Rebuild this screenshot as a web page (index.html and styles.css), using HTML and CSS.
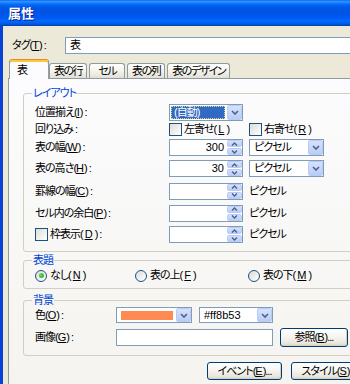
FILE: index.html
```html
<!DOCTYPE html>
<html lang="ja">
<head>
  <meta charset="UTF-8" />
  <meta name="viewport" content="width=device-width, initial-scale=1.0"/>
  <title>属性</title>
  <link rel="stylesheet" href="styles.css">
</head>
<body>
  <div class="window">
    <div class="titlebar">属性</div>

    <div class="frame">
      <!-- Tag name -->
      <div class="tag-row">
        <span class="tag-label">タグ(<u>T</u>) :</span>
        <div class="textbox tag-input">表</div>
      </div>

      <!-- Tabs -->
      <div class="tabs">
        <div class="tab active">表</div>
        <div class="tab">表の行</div>
        <div class="tab">セル</div>
        <div class="tab">表の列</div>
        <div class="tab">表のデザイン</div>
      </div>

      <div class="panel">
        <!-- Layout -->
        <fieldset class="group layout">
          <legend>レイアウト</legend>
          <div class="layout-grid">
            <span>位置揃え(<u>I</u>) :</span>
            <div class="select">
              <span class="select-value selected">(自動)</span>
              <span class="drop"><svg width="8" height="5" viewBox="0 0 8 5"><path d="M1 1 L4 4 L7 1" stroke="#4d6185" stroke-width="1.6" fill="none"/></svg></span>
            </div>
            <span></span>

            <span>回り込み :</span>
            <label class="check"><span class="box"></span>左寄せ(<u>L</u>)</label>
            <label class="check"><span class="box"></span>右寄せ(<u>R</u>)</label>

            <span>表の幅(<u>W</u>) :</span>
            <div class="spin">
              <span class="spin-value">300</span>
              <span class="spin-btns">
                <span><svg width="7" height="4" viewBox="0 0 7 4"><path d="M1 3.5 L3.5 1 L6 3.5" stroke="#4d6185" stroke-width="1.4" fill="none"/></svg></span>
                <span><svg width="7" height="4" viewBox="0 0 7 4"><path d="M1 0.5 L3.5 3 L6 0.5" stroke="#4d6185" stroke-width="1.4" fill="none"/></svg></span>
              </span>
            </div>
            <div class="select unit">
              <span class="select-value">ピクセル</span>
              <span class="drop"><svg width="8" height="5" viewBox="0 0 8 5"><path d="M1 1 L4 4 L7 1" stroke="#4d6185" stroke-width="1.6" fill="none"/></svg></span>
            </div>

            <span>表の高さ(<u>H</u>) :</span>
            <div class="spin">
              <span class="spin-value">30</span>
              <span class="spin-btns">
                <span><svg width="7" height="4" viewBox="0 0 7 4"><path d="M1 3.5 L3.5 1 L6 3.5" stroke="#4d6185" stroke-width="1.4" fill="none"/></svg></span>
                <span><svg width="7" height="4" viewBox="0 0 7 4"><path d="M1 0.5 L3.5 3 L6 0.5" stroke="#4d6185" stroke-width="1.4" fill="none"/></svg></span>
              </span>
            </div>
            <div class="select unit">
              <span class="select-value">ピクセル</span>
              <span class="drop"><svg width="8" height="5" viewBox="0 0 8 5"><path d="M1 1 L4 4 L7 1" stroke="#4d6185" stroke-width="1.6" fill="none"/></svg></span>
            </div>

            <span>罫線の幅(<u>C</u>) :</span>
            <div class="spin">
              <span class="spin-value"></span>
              <span class="spin-btns">
                <span><svg width="7" height="4" viewBox="0 0 7 4"><path d="M1 3.5 L3.5 1 L6 3.5" stroke="#4d6185" stroke-width="1.4" fill="none"/></svg></span>
                <span><svg width="7" height="4" viewBox="0 0 7 4"><path d="M1 0.5 L3.5 3 L6 0.5" stroke="#4d6185" stroke-width="1.4" fill="none"/></svg></span>
              </span>
            </div>
            <span>ピクセル</span>

            <span>セル内の余白(<u>P</u>) :</span>
            <div class="spin">
              <span class="spin-value"></span>
              <span class="spin-btns">
                <span><svg width="7" height="4" viewBox="0 0 7 4"><path d="M1 3.5 L3.5 1 L6 3.5" stroke="#4d6185" stroke-width="1.4" fill="none"/></svg></span>
                <span><svg width="7" height="4" viewBox="0 0 7 4"><path d="M1 0.5 L3.5 3 L6 0.5" stroke="#4d6185" stroke-width="1.4" fill="none"/></svg></span>
              </span>
            </div>
            <span>ピクセル</span>

            <label class="check"><span class="box"></span>枠表示(<u>D</u>) :</label>
            <div class="spin">
              <span class="spin-value"></span>
              <span class="spin-btns">
                <span><svg width="7" height="4" viewBox="0 0 7 4"><path d="M1 3.5 L3.5 1 L6 3.5" stroke="#4d6185" stroke-width="1.4" fill="none"/></svg></span>
                <span><svg width="7" height="4" viewBox="0 0 7 4"><path d="M1 0.5 L3.5 3 L6 0.5" stroke="#4d6185" stroke-width="1.4" fill="none"/></svg></span>
              </span>
            </div>
            <span>ピクセル</span>
          </div>
        </fieldset>

        <!-- Caption -->
        <fieldset class="group caption">
          <legend>表題</legend>
          <div class="radio-row">
            <label class="radio"><span class="dot on"></span>なし(<u>N</u>)</label>
            <label class="radio"><span class="dot"></span>表の上(<u>F</u>)</label>
            <label class="radio"><span class="dot"></span>表の下(<u>M</u>)</label>
          </div>
        </fieldset>

        <!-- Background -->
        <fieldset class="group background">
          <legend>背景</legend>
          <div class="bg-row">
            <span class="bg-label">色(<u>O</u>) :</span>
            <div class="color-pick">
              <span class="swatch-wrap"><span class="swatch"></span></span>
              <span class="drop"><svg width="8" height="5" viewBox="0 0 8 5"><path d="M1 1 L4 4 L7 1" stroke="#4d6185" stroke-width="1.6" fill="none"/></svg></span>
            </div>
            <div class="select hex">
              <span class="select-value">#ff8b53</span>
              <span class="drop"><svg width="8" height="5" viewBox="0 0 8 5"><path d="M1 1 L4 4 L7 1" stroke="#4d6185" stroke-width="1.6" fill="none"/></svg></span>
            </div>
          </div>
          <div class="bg-row image-row">
            <span class="bg-label">画像(<u>G</u>) :</span>
            <div class="textbox image-input"></div>
            <button class="btn browse">参照(<u>B</u>)...</button>
          </div>
        </fieldset>

        <div class="actions">
          <button class="btn">イベント(<u>E</u>)...</button>
          <button class="btn">スタイル(<u>S</u>)...</button>
        </div>
      </div>
    </div>
  </div>
</body>
</html>
```

FILE: styles.css
```css
* {
  box-sizing: border-box;
}

body {
  margin: 0;
  overflow: hidden;
  background: #ece9d8;
  font-family: "Liberation Sans", "Noto Sans CJK JP", sans-serif;
  font-size: 11px;
  line-height: 13px;
  letter-spacing: -1px;
  font-feature-settings: "palt";
  color: #000;
}

u {
  text-decoration: underline;
  text-underline-offset: 1px;
  letter-spacing: 0;
}

.window {
  width: 381px;
  height: 384px;
  display: flex;
  flex-direction: column;
}

.titlebar {
  flex: none;
  height: 26px;
  padding-left: 8px;
  display: flex;
  align-items: center;
  color: #fff;
  font-size: 13px;
  font-weight: bold;
  letter-spacing: 0;
  text-shadow: 1px 1px 0 #0a1e8c;
  background: linear-gradient(#0058ee 0%, #3593ff 4%, #288eff 8%, #127dff 12%, #036ffc 16%, #0262ee 22%, #0057e5 30%, #0054e3 40%, #0055eb 60%, #005bf5 70%, #026afe 80%, #0062ef 88%, #0052d6 94%, #0040ab 100%);
}

.frame {
  flex: 1;
  min-height: 0;
  display: flex;
  flex-direction: column;
  border-left: 3px solid #0842d6;
  padding-left: 5px;
}

/* tag row */
.tag-row {
  display: flex;
  align-items: center;
  height: 17px;
  margin-top: 11px;
  padding-left: 4px;
}

.tag-label {
  width: 53px;
}

.textbox {
  height: 17px;
  border: 1px solid #7f9db9;
  background: #fff;
  padding-left: 4px;
  display: flex;
  align-items: center;
}

.tag-input {
  flex: 1;
}

/* tabs */
.tabs {
  display: flex;
  align-items: flex-end;
  height: 19px;
  margin-top: 5px;
  padding-left: 1px;
  position: relative;
  z-index: 1;
  letter-spacing: -1.5px;
}

.tab {
  height: 15px;
  min-width: 36px;
  padding: 0 4px;
  margin-left: 2px;
  display: flex;
  align-items: center;
  justify-content: center;
  border: 1px solid #919b9c;
  border-bottom: none;
  border-radius: 3px 3px 0 0;
  background: linear-gradient(#fff, #f4f3ee 50%, #e2e0d5);
}

.tab.active {
  height: 20px;
  width: 40px;
  margin-left: 0;
  margin-bottom: -1px;
  padding: 1px 0 0 7px;
  justify-content: flex-start;
  border-top: 1px solid #e68b2c;
  box-shadow: inset 0 2px 0 #ffc83c;
  background: #fcfcfe;
}

.tab.active + .tab {
  margin-left: 0;
}

/* panel */
.panel {
  flex: 1;
  margin-bottom: -20px;
  padding: 0 14px;
  border: 1px solid #919b9c;
  background: linear-gradient(#fcfcfe, #f4f3ee);
}

.group {
  margin: 0;
  min-width: 0;
  padding: 4px 12px 6px 11px;
  border: 1px solid #d0d0bf;
  border-radius: 3px;
}

.group legend {
  padding: 0 1px;
  margin-left: -3px;
  color: #0046d5;
  line-height: 14px;
}

.layout {
  margin-top: 7px;
}

.caption {
  margin-top: 1px;
  padding-top: 0;
  padding-bottom: 4px;
}

.background {
  margin-top: 4px;
  padding-top: 0;
  padding-bottom: 9px;
}

.layout-grid {
  display: grid;
  grid-template-columns: 128px 74px auto;
  grid-template-rows: 17px 17px 19px 23px 22px 22px 21px;
  column-gap: 6px;
  align-items: center;
}

/* combo boxes */
.select {
  height: 17px;
  display: flex;
  align-items: center;
  border: 1px solid #7f9db9;
  background: #fff;
}

.select-value {
  flex: 1;
  height: 13px;
  margin: 0 2px 0 1px;
  padding-left: 3px;
  white-space: nowrap;
}

.select-value.selected {
  background: #316ac5;
  color: #fff;
  outline: 1px dotted #e8d870;
  outline-offset: -1px;
}

.drop {
  width: 15px;
  height: 15px;
  flex: none;
  display: flex;
  align-items: center;
  justify-content: center;
  border: 1px solid #b8cbf5;
  border-radius: 2px;
  background: linear-gradient(#d6e1fd, #bacdf7);
}

.unit {
  width: 75px;
}

/* spinners */
.spin {
  height: 17px;
  display: flex;
  border: 1px solid #7f9db9;
  background: #fff;
}

.spin-value {
  flex: 1;
  padding-right: 3px;
  text-align: right;
  line-height: 15px;
  letter-spacing: 0;
}

.spin-btns {
  width: 15px;
  display: flex;
  flex-direction: column;
  gap: 1px;
}

.spin-btns span {
  flex: 1;
  display: flex;
  align-items: center;
  justify-content: center;
  border: 1px solid #b8cbf5;
  border-radius: 2px;
  background: linear-gradient(#d6e1fd, #bacdf7);
}

/* check boxes and radios */
.check,
.radio {
  display: flex;
  align-items: center;
  gap: 2px;
  white-space: nowrap;
}

.box {
  width: 13px;
  height: 13px;
  flex: none;
  border: 1px solid #1c5180;
  background: linear-gradient(135deg, #dcdcd7, #fff);
}

.radio-row {
  display: grid;
  grid-template-columns: 100px 113px auto;
  height: 17px;
  align-items: center;
}

.dot {
  width: 12px;
  height: 12px;
  flex: none;
  display: flex;
  align-items: center;
  justify-content: center;
  border: 1px solid #1c5180;
  border-radius: 50%;
  background: linear-gradient(135deg, #dcdcd7, #fff);
  margin-right: 1px;
}

.dot.on::after {
  content: "";
  width: 5px;
  height: 5px;
  border-radius: 50%;
  background: radial-gradient(circle at 35% 35%, #62dd5e, #21a121);
}

/* background rows */
.bg-row {
  display: flex;
  align-items: center;
  height: 16px;
}

.image-row {
  height: 17px;
  margin-top: 6px;
}

.bg-label {
  width: 81px;
}

.color-pick {
  width: 76px;
  height: 16px;
  display: flex;
  align-items: center;
  border: 1px solid #7f9db9;
  background: #fff;
}

.color-pick .drop {
  height: 14px;
}

.swatch-wrap {
  flex: 1;
  height: 100%;
  padding: 3px 3px 2px 4px;
}

.swatch {
  display: block;
  height: 100%;
  background: #ff8b53;
}

.hex {
  width: 74px;
  height: 16px;
  margin-left: 7px;
}

.hex .select-value {
  letter-spacing: 0;
}

.hex .drop {
  height: 14px;
}

.image-input {
  width: 157px;
}

/* buttons */
.btn {
  height: 18px;
  width: 75px;
  padding: 0;
  display: flex;
  align-items: center;
  justify-content: center;
  font: inherit;
  letter-spacing: inherit;
  color: #000;
  border: 1px solid #003c74;
  border-radius: 3px;
  background: linear-gradient(#fff, #f6f5f0 45%, #ebe8dd 80%, #dad6c8);
  box-shadow: inset -1px -1px 0 #d6d0c5;
}

.browse {
  width: 68px;
  height: 19px;
  margin-left: 7px;
}

.actions {
  display: flex;
  justify-content: flex-end;
  gap: 9px;
  margin-top: 6px;
}
```
